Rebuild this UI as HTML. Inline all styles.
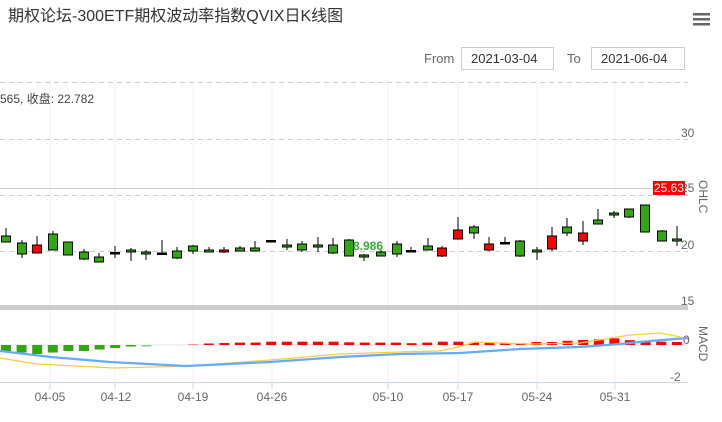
<!DOCTYPE html>
<html><head><meta charset="utf-8"><style>
body{margin:0;width:722px;height:422px;background:#fff;overflow:hidden;font-family:"Liberation Sans","Noto Sans CJK SC",sans-serif;}
svg{position:absolute;left:0;top:0}
</style></head><body>
<svg id="s" width="722" height="422" xmlns="http://www.w3.org/2000/svg" font-family="Liberation Sans, Noto Sans CJK SC, sans-serif">
<text x="8" y="21" font-size="16" fill="#333">期权论坛-300ETF期权波动率指数QVIX日K线图</text>
<g fill="#666"><rect x="693" y="13" width="17" height="2.5"/><rect x="693" y="18" width="17" height="2.5"/><rect x="693" y="23" width="17" height="2.5"/></g>
<text x="424" y="63" font-size="13" fill="#666">From</text>
<rect x="461.5" y="47.5" width="92" height="22" fill="#fff" stroke="#ccc"/>
<text x="471" y="63" font-size="13" fill="#333">2021-03-04</text>
<text x="567" y="63" font-size="13" fill="#666">To</text>
<rect x="591.5" y="47.5" width="93" height="22" fill="#fff" stroke="#ccc"/>
<text x="601" y="63" font-size="13" fill="#333">2021-06-04</text>
<g stroke="#f0f0f0" stroke-width="1">
<line x1="50" y1="80" x2="50" y2="382"/><line x1="115" y1="80" x2="115" y2="382"/><line x1="193" y1="80" x2="193" y2="382"/><line x1="272" y1="80" x2="272" y2="382"/><line x1="388" y1="80" x2="388" y2="382"/><line x1="458" y1="80" x2="458" y2="382"/><line x1="537" y1="80" x2="537" y2="382"/><line x1="615" y1="80" x2="615" y2="382"/></g>
<g stroke="#ccc" stroke-dasharray="5,4"><line x1="0" y1="82.5" x2="688" y2="82.5"/><line x1="0" y1="139.5" x2="688" y2="139.5"/><line x1="0" y1="195.5" x2="688" y2="195.5"/><line x1="0" y1="251.5" x2="688" y2="251.5"/></g>
<line x1="0" y1="188.5" x2="688" y2="188.5" stroke="#ccc"/>
<text x="0" y="103" font-size="12" fill="#444">565, 收盘: 22.782</text>
<g font-size="12" fill="#666"><text x="681" y="137">30</text><text x="681" y="192">25</text><text x="681" y="249">20</text><text x="681" y="305">15</text><text x="683" y="344">0</text><text x="670" y="381">-2</text></g>
<text transform="translate(699,180) rotate(90)" font-size="12" fill="#666">OHLC</text>
<text transform="translate(699,326) rotate(90)" font-size="12" fill="#666">MACD</text>
<g id="c"></g>
<rect x="653" y="181" width="32" height="14" fill="#f00"/>
<text x="654" y="192" font-size="12" fill="#fff">25.63</text>
<text x="353" y="250" font-size="12" font-weight="bold" fill="#3a3">8.986</text>
<rect x="0" y="305" width="688" height="5" fill="#ccc"/>
<g id="m"></g>
<line x1="0" y1="382.5" x2="688" y2="382.5" stroke="#ccd6eb"/>
<g stroke="#ccd6eb"><line x1="50" y1="382" x2="50" y2="389"/><line x1="115" y1="382" x2="115" y2="389"/><line x1="193" y1="382" x2="193" y2="389"/><line x1="272" y1="382" x2="272" y2="389"/><line x1="388" y1="382" x2="388" y2="389"/><line x1="458" y1="382" x2="458" y2="389"/><line x1="537" y1="382" x2="537" y2="389"/><line x1="615" y1="382" x2="615" y2="389"/></g>
<g font-size="12" fill="#666" text-anchor="middle"><text x="50" y="401">04-05</text><text x="116" y="401">04-12</text><text x="193" y="401">04-19</text><text x="272" y="401">04-26</text><text x="388" y="401">05-10</text><text x="458" y="401">05-17</text><text x="537" y="401">05-24</text><text x="615" y="401">05-31</text></g>
<polyline fill="none" stroke="#fc3" stroke-width="1.2" points="0,358 37,364 115,368 190,366 270,360 340,354 400,352 440,351 458,347 475,342 530,344 580,343 630,335 660,333 680,337"/>
<polyline fill="none" stroke="#6af" stroke-width="2.2" points="0,351 51,357 110,362 186,366 270,362 340,357 400,354 460,353 520,349 580,347 620,344 650,341 688,338"/>
</svg>
<script>
var C=[[6,236,242,228,242,'g'],[22,243,254,240,258,'g'],[37,245,253,236,253,'r'],[53,234,250,231,250,'g'],[68,242,255,242,255,'g'],[84,252,259,249,260,'g'],[99,257,262,253,262,'g'],[115,252.5,253.5,246,258,'k'],[131,250,252,248,261,'g'],[146,252,254,250,260,'g'],[162,253,253,240,254,'k'],[177,251,258,247,259,'g'],[193,246,251,245,254,'g'],[209,250,252,247,252,'g'],[224,250,252,247,253,'r'],[240,248,251,246,251,'g'],[255,248,251,241,251,'g'],[271,240.5,241.5,240,241,'k'],[287,245,247,239,250,'g'],[302,244,250,241,252,'g'],[318,245,247,237,252,'g'],[333,245,253,238,254,'g'],[349,240,256,239,256,'g'],[364,255,257,254,261,'g'],[381,252,256,250,256,'g'],[397,244,254,241,257,'g'],[411,250.5,251.5,247,252,'k'],[428,246,250,238,250,'g'],[442,248,256,246,257,'r'],[458,230,239,217,239,'r'],[474,227,233,225,239,'g'],[489,244,250,237,251,'r'],[505,242.5,243.5,237,244,'k'],[520,241,256,240,257,'g'],[537,250,252,247,260,'g'],[552,236,249,227,251,'r'],[567,227,233,218,236,'g'],[583,233,241,221,245,'r'],[598,220,224,209,224,'g'],[614,213,215,211,218,'g'],[629,209,217,209,218,'g'],[645,205,232,205,232,'g'],[662,231,241,230,241,'g'],[677,239,241,226,246,'g']];
var h='';C.forEach(function(c){var f=c[5]=='g'?'#33a614':c[5]=='r'?'#f00':'#000';h+='<line x1="'+c[0]+'" y1="'+c[3]+'" x2="'+c[0]+'" y2="'+c[4]+'" stroke="#000"/>';h+='<rect x="'+(c[0]-4.5)+'" y="'+c[1]+'" width="9" height="'+Math.max(c[2]-c[1],1.5)+'" fill="'+f+'" stroke="#000"/>';});
document.getElementById('c').innerHTML=h;
var M=[-4,-5,-6,-5,-4,-4,-3,-2,-1,-1,0,0,0.5,1,1.3,1.6,1.6,2.2,2.2,2.2,2.2,2.2,1.8,1.6,1.6,1.6,1.2,1.6,2.2,2.2,1.6,1.6,1.2,1.2,2,2,2.8,3.4,3.8,4.4,3.2,2.4,2.2,2];
var m='';for(var i=0;i<M.length;i++){var x=6+i*15.6,v=M[i]*1.5;if(Math.abs(v)<0.5)continue;var col=v<0?'#33a614':'#f00';if(i==9)col='#8c8';if(i==12)col='#f66';m+='<rect x="'+(x-5)+'" y="'+(v>0?345-v:345)+'" width="10" height="'+Math.abs(v)+'" fill="'+col+'"/>';}
document.getElementById('m').innerHTML='<line x1="0" y1="345" x2="688" y2="345" stroke="#e6e6e6"/>'+m;
</script>
</body></html>
